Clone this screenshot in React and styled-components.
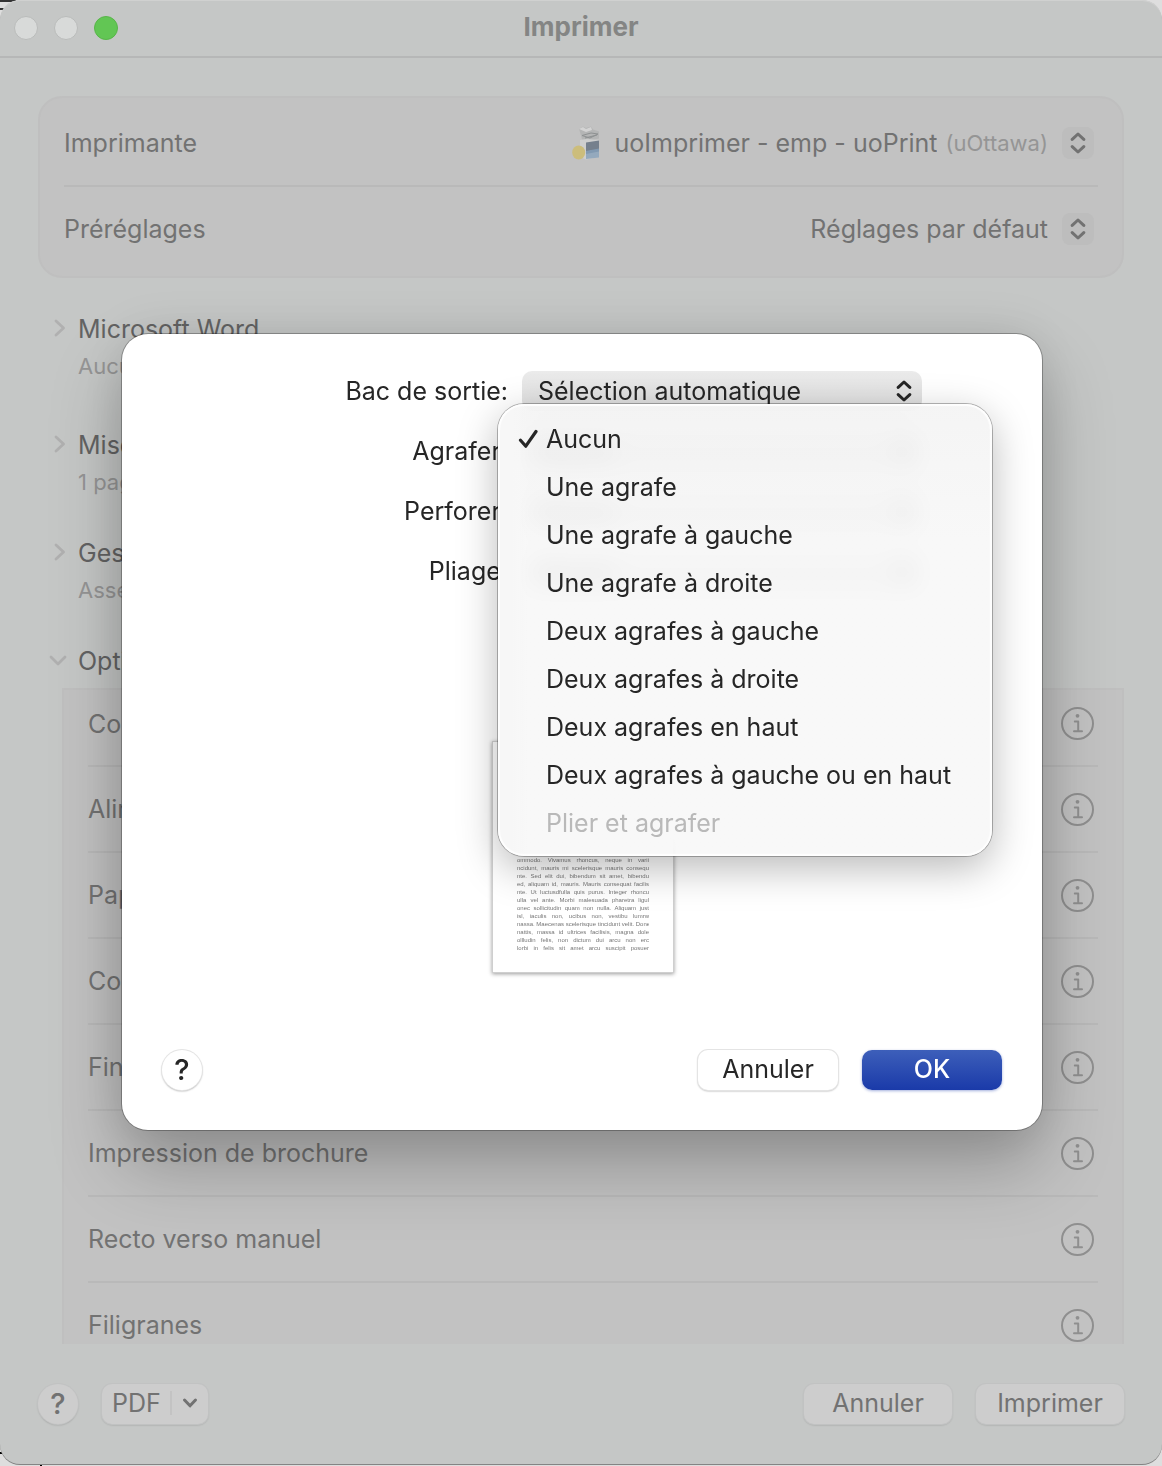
import React, { useState } from "react";
import styled, { createGlobalStyle } from "styled-components";

const COLORS = {
  WINDOW: "#c5c7c6",
  GROUP: "#c2c2c2",
  GROUP_BORDER: "#bfbfbf",
  SEPARATOR: "#b9b9b9",
  TEXT: "#727272",
  TEXT_MUTED: "#959595",
  BUTTON: "#cdcdcd",
  INK: "#262626",
};

const STAPLE_OPTIONS = [
  { label: "Aucun" },
  { label: "Une agrafe" },
  { label: "Une agrafe à gauche" },
  { label: "Une agrafe à droite" },
  { label: "Deux agrafes à gauche" },
  { label: "Deux agrafes à droite" },
  { label: "Deux agrafes en haut" },
  { label: "Deux agrafes à gauche ou en haut" },
  { label: "Plier et agrafer", disabled: true },
];

const SECTIONS = [
  { title: "Microsoft Word", summary: "Aucune", gap: 48 },
  { title: "Mise en page", summary: "1 page par feuille", gap: 40 },
  { title: "Gestion du papier", summary: "Assembler", gap: 40 },
];

const PRINTER_OPTIONS = [
  "Couleur",
  "Alimentation",
  "Papier",
  "Couvertures",
  "Finition",
  "Impression de brochure",
  "Recto verso manuel",
  "Filigranes",
];

const PREVIEW_LINES = [
  "ommodo. Vivamus rhoncus, neque in varii",
  "ncidunt, mauris mi scelerisque mauris consequ",
  "nte. Sed elit dui, bibendum sit amet, bibendu",
  "ed, aliquam id, mauris. Mauris consequat facilis",
  "nte. Ut luctusdfulla quis purus. Integer rhoncu",
  "ulla vel ante. Morbi malesuada pharetra ligul",
  "onec sollicitudin quam non nulla. Aliquam just",
  "isl, iaculis non, ucibus non, vestibu lumrw",
  "nassa. Maecenas scelerisque tincidunt velit. Done",
  "nattis, massa id ultrices facilisis, magna dole",
  "ollludin felis, non dictum dui arcu non erc",
  "lorbi in felis sit amet arcu suscipit posuer",
];

const GlobalStyle = createGlobalStyle`
  *, *::before, *::after {
    box-sizing: border-box;
  }

  body {
    margin: 0;
    background: #dedede;
  }

  body, button, select {
    font-family: Inter, "Liberation Sans", sans-serif;
    font-size: 25px;
    line-height: 32px;
  }

  button, select {
    margin: 0;
    padding: 0;
    border: none;
    background: none;
    color: inherit;
    appearance: none;
    outline: none;
  }
`;

const Desktop = styled.div`
  height: 100vh;
  padding-bottom: 2px;
  background:
    linear-gradient(#333, #333) 0 0 / 16px 2px no-repeat,
    linear-gradient(#333, #333) 0 8px / 4px 2px no-repeat,
    linear-gradient(#000, #000) 0 calc(100% - 12px) / 2px 2px no-repeat,
    linear-gradient(#000, #000) 40px 100% / 2px 2px no-repeat,
    #dedede;
`;

const Window = styled.main`
  display: flex;
  flex-direction: column;
  height: 100%;
  overflow: hidden;
  border-radius: 20px;
  background: ${COLORS.WINDOW};
  color: ${COLORS.TEXT};
  box-shadow: inset 0 1px 0 #d0d1d0, 0 1px 0 #848484;
`;

const TitleBar = styled.header`
  display: grid;
  grid-template-columns: 1fr auto 1fr;
  align-items: center;
  flex-shrink: 0;
  height: 58px;
  padding: 0 14px;
  border-bottom: 2px solid #b6b7b7;
`;

const Lights = styled.div`
  display: flex;
  gap: 16px;
`;

const Light = styled.button`
  width: 24px;
  height: 24px;
  border: 1px solid ${({ $active }) => ($active ? "#58b549" : "#b9bbba")};
  border-radius: 50%;
  background: ${({ $active }) => ($active ? "#62c654" : "#d8dad9")};
`;

const Title = styled.h1`
  margin: 0;
  padding-bottom: 2px;
  color: #848584;
  font-size: 26px;
  font-weight: 700;
  line-height: 32px;
`;

const Body = styled.div`
  display: flex;
  flex-direction: column;
  flex: 1;
  min-height: 0;
  padding: 38px 38px 0;
`;

const Group = styled.section`
  flex-shrink: 0;
  margin-bottom: 35px;
  padding: 3px 24px;
  border: 2px solid ${COLORS.GROUP_BORDER};
  border-radius: 24px;
  background: ${COLORS.GROUP};
`;

const SettingRow = styled.div`
  display: flex;
  align-items: center;
  justify-content: space-between;
  height: 86px;
  padding-right: 4px;
  border-bottom: 2px solid ${COLORS.SEPARATOR};

  &:last-child {
    border-bottom-color: transparent;
  }
`;

const PopUp = styled.div`
  display: flex;
  align-items: center;
`;

const InlineSelect = styled.select`
  field-sizing: content;
  margin-left: 15px;
`;

const Origin = styled.span`
  padding: 0 6px 0 8px;
  color: ${COLORS.TEXT_MUTED};
  font-size: 22px;
`;

const Stepper = styled.span`
  display: flex;
  align-items: center;
  justify-content: center;
  width: 32px;
  height: 32px;
  margin-left: ${({ $gap = 8 }) => $gap}px;
  border-radius: 8px;
  background: #bdbdbd;
`;

const Section = styled.section`
  display: flex;
  flex-shrink: 0;
  gap: 10px;
  margin-bottom: ${({ $gap }) => $gap}px;
  padding-left: 10px;
`;

const Disclosure = styled.button`
  display: flex;
  align-items: center;
  justify-content: center;
  width: 20px;
  height: 30px;
`;

const SectionTitle = styled.h2`
  margin: 0;
  color: #636363;
  font-size: 25px;
  font-weight: 400;
  line-height: 32px;
`;

const Summary = styled.p`
  margin: 7px 0 1px;
  color: ${COLORS.TEXT_MUTED};
  font-size: 22px;
  line-height: 28px;
`;

const OptionPanel = styled.ul`
  flex: 1;
  min-height: 0;
  margin: 0 0 0 24px;
  padding: 0 24px;
  overflow: hidden;
  border: 2px solid ${COLORS.GROUP_BORDER};
  border-bottom: none;
  background: ${COLORS.GROUP};
  list-style: none;
`;

const OptionRow = styled.li`
  display: flex;
  align-items: center;
  justify-content: space-between;
  height: 86px;
  padding-right: 4px;
  border-bottom: 2px solid ${COLORS.SEPARATOR};

  &:first-child {
    height: 77px;
    padding-bottom: 8px;
  }
`;

const InfoButton = styled.button`
  display: flex;
  color: #8f8f8f;
`;

const Footer = styled.footer`
  display: flex;
  align-items: center;
  flex-shrink: 0;
  gap: 24px;
  padding: 40px 38px;
`;

const Spacer = styled.span`
  flex: 1;
`;

const PushButton = styled.button`
  width: ${({ $width = 148 }) => $width}px;
  height: 40px;
  padding-bottom: 2px;
  border-radius: 10px;
  background: ${({ $onSheet }) => ($onSheet ? "#fff" : COLORS.BUTTON)};
  box-shadow: ${({ $onSheet }) =>
    $onSheet
      ? "0 0 0 1px #e4e4e4, 0 1px 2px rgba(0, 0, 0, 0.45)"
      : "0 0 0 1px #c1c2c2, 0 1px 2px rgba(0, 0, 0, 0.25)"};
`;

const DefaultButton = styled(PushButton)`
  background: linear-gradient(#3d5fba, #1a3aa9);
  color: #fff;
  font-weight: 500;
  box-shadow: 0 1px 3px rgba(26, 58, 169, 0.4);
`;

const HelpButton = styled(PushButton)`
  width: 40px;
  padding: 0;
  border-radius: 50%;
  font-size: 29px;
  font-weight: 500;
`;

const PdfButton = styled(PushButton)`
  display: flex;
  align-items: center;
  justify-content: space-between;
  padding: 0 10px 2px;
`;

const PdfDivider = styled.span`
  width: 2px;
  height: 24px;
  background: #c3c3c3;
`;

const Overlay = styled.div`
  position: fixed;
  inset: 0;
  display: grid;
  place-items: center;
  padding: 0 0 2px 2px;
`;

const Sheet = styled.section`
  display: flex;
  flex-direction: column;
  align-items: center;
  width: 920px;
  max-width: 100%;
  min-height: 796px;
  padding: 37px 40px 40px;
  border-radius: 26px;
  background: #fff;
  color: ${COLORS.INK};
  box-shadow:
    0 0 0 1px rgba(0, 0, 0, 0.28),
    0 0 50px rgba(0, 0, 0, 0.1),
    0 36px 70px rgba(0, 0, 0, 0.25);
`;

const Form = styled.form`
  display: grid;
  grid-template-columns: 346px 400px;
  grid-auto-rows: 40px;
  align-items: center;
  align-self: flex-start;
  column-gap: 14px;
  row-gap: 20px;
`;

const FieldLabel = styled.label`
  text-align: right;
`;

const Field = styled.div`
  position: relative;
  display: grid;
  align-items: center;
`;

const FieldSelect = styled.select`
  grid-area: 1 / 1;
  height: 40px;
  padding: 0 16px;
  border-radius: 10px;
  background: linear-gradient(#ebebeb, #dedede);
`;

const FieldArrows = styled.span`
  display: flex;
  grid-area: 1 / 1;
  justify-self: end;
  padding-right: 10px;
  pointer-events: none;
`;

const Menu = styled.ul`
  position: absolute;
  z-index: 1;
  top: -27px;
  left: -24px;
  width: 494px;
  margin: 0;
  padding: 11px 5px 9px;
  border-radius: 26px;
  background:
    linear-gradient(90deg, #f7f7f7 14px, rgba(247, 247, 247, 0) 30px),
    linear-gradient(rgba(243, 243, 243, 0.88), rgba(247, 247, 247, 0.88) 30%);
  backdrop-filter: blur(12px);
  box-shadow:
    inset 0 0 1px 2px rgba(255, 255, 255, 0.9),
    0 0 0 1px rgba(0, 0, 0, 0.28),
    0 12px 40px rgba(0, 0, 0, 0.28);
  list-style: none;
`;

const MenuItem = styled.li`
  display: grid;
  grid-template-columns: 28px 1fr;
  align-items: center;
  height: 48px;
  padding-left: 15px;
  color: ${({ $disabled }) => ($disabled ? "#b9b9b9" : COLORS.INK)};
  white-space: nowrap;
  cursor: default;
`;

const MenuLabel = styled.span`
  grid-column: 2;
  padding-bottom: 1px;
`;

const Preview = styled.div`
  display: flex;
  flex-direction: column;
  justify-content: flex-end;
  width: 182px;
  height: 232px;
  margin: 150px 0 0 2px;
  padding: 0 25px 21px;
  background: #fff;
  box-shadow: inset 0 0 0 1px #cfcfcf, 0 1px 4px rgba(0, 0, 0, 0.4);
`;

const PreviewLine = styled.span`
  display: block;
  overflow: hidden;
  color: #777;
  font-family: "Liberation Sans", sans-serif;
  font-size: 6px;
  line-height: 8px;
  text-align: justify;
  text-align-last: justify;
  white-space: nowrap;
`;

const SheetActions = styled.div`
  display: flex;
  align-items: center;
  align-self: stretch;
  gap: 24px;
  margin-top: auto;
`;

const Arrows = () => (
  <svg width="16" height="22" viewBox="0 0 16 22" fill="none" aria-hidden="true">
    <path
      d="M2.200 7.400 8 2l5.800 5.400M2.200 14.600 8 20l5.800-5.400"
      stroke="currentColor"
      strokeWidth="3"
      strokeLinecap="round"
      strokeLinejoin="round"
    />
  </svg>
);

const Chevron = ({ $open }) => (
  <svg width="18" height="18" viewBox="0 0 18 18" fill="none" aria-hidden="true">
    <path
      d={$open ? "M2 6l7 7 7-7" : "M7 2l7.500 7-7.500 7"}
      stroke="#b0b0b0"
      strokeWidth="2.800"
      strokeLinecap="round"
      strokeLinejoin="round"
    />
  </svg>
);

const CheckMark = () => (
  <svg width="20" height="20" viewBox="0 0 20 20" fill="none" aria-hidden="true">
    <path
      d="M2.500 11.200 7.800 17.200 18 2.500"
      stroke="currentColor"
      strokeWidth="3.200"
      strokeLinecap="round"
      strokeLinejoin="round"
    />
  </svg>
);

const InfoIcon = () => (
  <svg width="33" height="33" viewBox="0 0 33 33" fill="none" aria-hidden="true">
    <circle cx="16.500" cy="16.500" r="15.500" stroke="currentColor" strokeWidth="2" />
    <circle cx="16.500" cy="8.800" r="1.900" fill="currentColor" />
    <path
      d="M13.800 14.500h3.400v9.700M13 24.300h8"
      stroke="currentColor"
      strokeWidth="2"
      strokeLinecap="round"
      strokeLinejoin="round"
    />
  </svg>
);

const PrinterIcon = () => (
  <svg width="28" height="34" viewBox="0 0 28 34" aria-hidden="true">
    <path d="M7 3 11 .5l3 1.500 5-1.500 2 3 6 2v7l-7 2-10-1-1-4Z" fill="#b4b5b5" />
    <path d="M7 3 11 1l3 2 5-2 1 3-6 2Z" fill="#d3d3d3" />
    <path d="M10 9.500 19 7l7 1-8 4ZM13 12l12-3" fill="none" stroke="#8e9192" />
    <path d="M8 14 15 13l12 1v17l-13 2.500L8 31Z" fill="#cecfcf" />
    <path d="M14 16.500 27 14.500v9l-13 2Z" fill="#75808d" />
    <path d="M14 25.500 27 23.500v8l-13 1.500Z" fill="#94a9bd" />
    <path d="M14 25 27 22.500v3l-13 2.500Z" fill="#8199b1" />
    <ellipse cx="6.700" cy="26.500" rx="6.500" ry="7" fill="#ccbd7b" />
  </svg>
);

const SheetField = ({ $id, $label, $value, children }) => (
  <React.Fragment>
    <FieldLabel htmlFor={$id}>{$label}</FieldLabel>
    <Field>
      <FieldSelect id={$id} defaultValue={$value}>
        <option>{$value}</option>
      </FieldSelect>
      <FieldArrows>
        <Arrows />
      </FieldArrows>
      {children}
    </Field>
  </React.Fragment>
);

const StapleMenu = ({ $selected, $onSelect }) => (
  <Menu role="listbox" aria-label="Agrafer">
    {STAPLE_OPTIONS.map(({ label, disabled = false }) => (
      <MenuItem
        key={label}
        role="option"
        aria-selected={label === $selected}
        aria-disabled={disabled}
        $disabled={disabled}
        onClick={() => !disabled && $onSelect(label)}
      >
        {label === $selected && <CheckMark />}
        <MenuLabel>{label}</MenuLabel>
      </MenuItem>
    ))}
  </Menu>
);

const FinishingSheet = () => {
  const [staple, setStaple] = useState("Aucun");

  return (
    <Overlay>
      <Sheet role="dialog" aria-label="Finition">
        <Form>
          <SheetField $id="tray" $label="Bac de sortie:" $value="Sélection automatique" />
          <SheetField $id="staple" $label="Agrafer:" $value="Aucun">
            <StapleMenu $selected={staple} $onSelect={setStaple} />
          </SheetField>
          <SheetField $id="punch" $label="Perforer:" $value="Aucun" />
          <SheetField $id="fold" $label="Pliage:" $value="Aucun" />
        </Form>
        <Preview>
          {PREVIEW_LINES.map((line) => (
            <PreviewLine key={line}>{line}</PreviewLine>
          ))}
        </Preview>
        <SheetActions>
          <HelpButton $onSheet aria-label="Aide">
            ?
          </HelpButton>
          <Spacer />
          <PushButton $onSheet $width={140}>
            Annuler
          </PushButton>
          <DefaultButton $width={140}>OK</DefaultButton>
        </SheetActions>
      </Sheet>
    </Overlay>
  );
};

const App = () => {
  return (
    <Desktop>
      <GlobalStyle />
      <Window>
        <TitleBar>
          <Lights>
            <Light aria-label="Fermer" />
            <Light aria-label="Réduire" />
            <Light $active aria-label="Agrandir" />
          </Lights>
          <Title>Imprimer</Title>
        </TitleBar>
        <Body>
          <Group>
            <SettingRow>
              <label htmlFor="printer">Imprimante</label>
              <PopUp>
                <PrinterIcon />
                <InlineSelect id="printer">
                  <option>uoImprimer - emp - uoPrint</option>
                </InlineSelect>
                <Origin>(uOttawa)</Origin>
                <Stepper>
                  <Arrows />
                </Stepper>
              </PopUp>
            </SettingRow>
            <SettingRow>
              <label htmlFor="presets">Préréglages</label>
              <PopUp>
                <InlineSelect id="presets">
                  <option>Réglages par défaut</option>
                </InlineSelect>
                <Stepper $gap={14}>
                  <Arrows />
                </Stepper>
              </PopUp>
            </SettingRow>
          </Group>
          {SECTIONS.map(({ title, summary, gap }) => (
            <Section key={title} $gap={gap}>
              <Disclosure aria-label={title} aria-expanded={false}>
                <Chevron />
              </Disclosure>
              <div>
                <SectionTitle>{title}</SectionTitle>
                <Summary>{summary}</Summary>
              </div>
            </Section>
          ))}
          <Section $gap={11}>
            <Disclosure aria-label="Options d’imprimante" aria-expanded>
              <Chevron $open />
            </Disclosure>
            <SectionTitle>Options d’imprimante</SectionTitle>
          </Section>
          <OptionPanel>
            {PRINTER_OPTIONS.map((option) => (
              <OptionRow key={option}>
                {option}
                <InfoButton aria-label={`Détails : ${option}`}>
                  <InfoIcon />
                </InfoButton>
              </OptionRow>
            ))}
          </OptionPanel>
        </Body>
        <Footer>
          <HelpButton aria-label="Aide">?</HelpButton>
          <PdfButton $width={106}>
            PDF
            <PdfDivider />
            <svg width="16" height="12" viewBox="0 0 16 12" fill="none" aria-hidden="true">
              <path
                d="M2.500 3 8 8.800 13.500 3"
                stroke="currentColor"
                strokeWidth="3"
                strokeLinecap="round"
                strokeLinejoin="round"
              />
            </svg>
          </PdfButton>
          <Spacer />
          <PushButton>Annuler</PushButton>
          <PushButton>Imprimer</PushButton>
        </Footer>
      </Window>
      <FinishingSheet />
    </Desktop>
  );
};

export default App;
